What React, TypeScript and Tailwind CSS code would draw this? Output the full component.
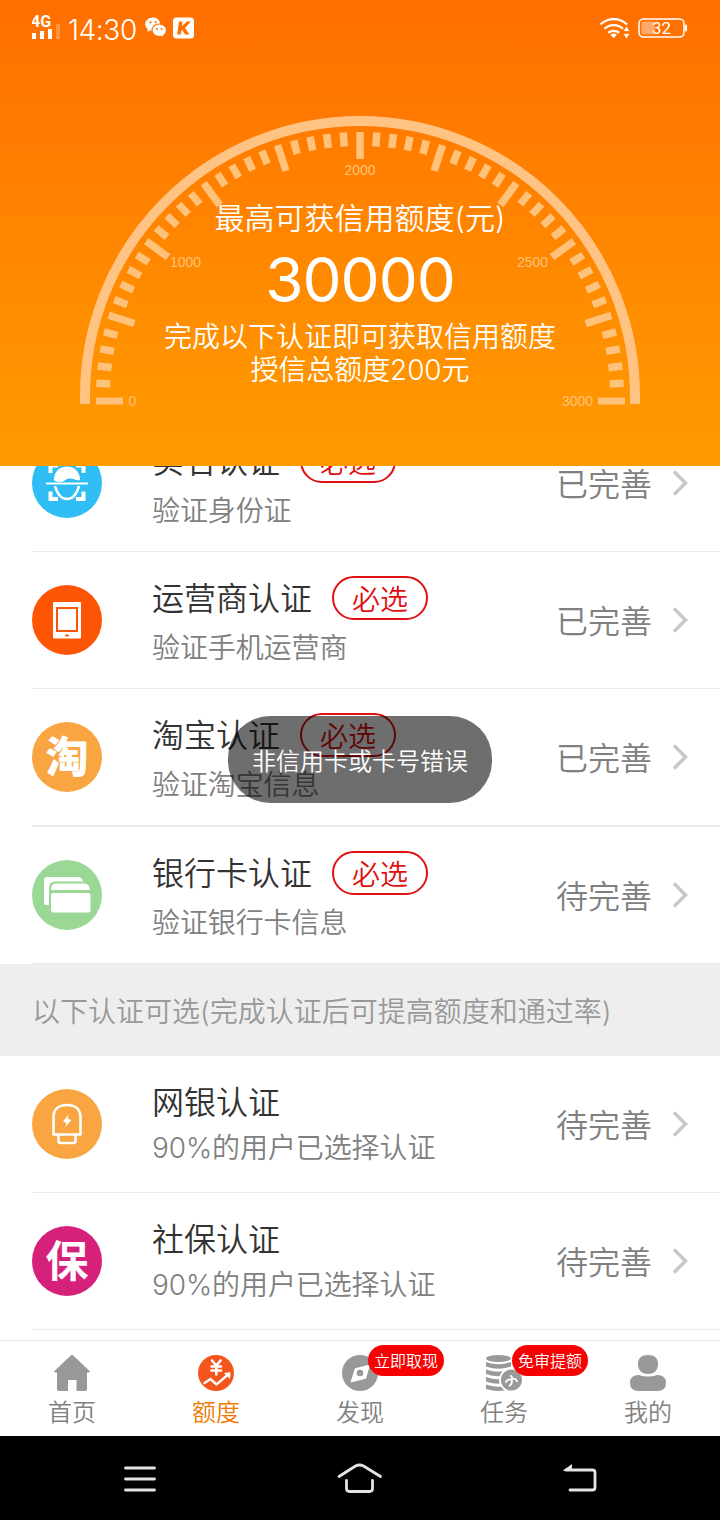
import React from 'react';

type RowProps = {
  icon: React.ReactNode;
  title: string;
  desc: string;
  status: string;
  required?: boolean;
  className?: string;
};

// angles of the long ticks, measured up from the left end of the arc
const majors = [-1, 17.8, 35.9, 53.7, 71.8, 90];

const Tick = ({ angle, long }: { angle: number; long: boolean }) => (
  <rect
    x={96}
    y={392.2}
    width={long ? 27 : 14}
    height={7.5}
    transform={`rotate(${angle} 360 396)`}
  />
);

const Gauge = () => {
  const ticks: { angle: number; long: boolean }[] = [];
  for (let i = 0; i < majors.length - 1; i++) {
    for (let j = 0; j < 5; j++) {
      const angle = majors[i] + ((majors[i + 1] - majors[i]) * j) / 5;
      ticks.push({ angle, long: j === 0 });
      ticks.push({ angle: 180 - angle, long: j === 0 });
    }
  }
  ticks.push({ angle: 90, long: true });
  return (
    <svg className="absolute inset-0" width="720" height="466" viewBox="0 0 720 466">
      <path d="M85 404V396A275 275 0 0 1 635 396V404" fill="none" stroke="#ffc384" strokeWidth="10" />
      <g fill="#ffc27a">
        {ticks
          .filter((t) => t.angle > 0 && t.angle < 180)
          .map((t) => (
            <Tick key={t.angle} angle={t.angle} long={t.long} />
          ))}
        <rect x="96" y="397.5" width="27" height="7" />
        <rect x="598" y="397.5" width="27" height="7" />
      </g>
      <g fill="#ffc27a" fontFamily="Liberation Sans, sans-serif" fontSize="14" textAnchor="middle">
        <text x="132.5" y="406">0</text>
        <text x="185.5" y="267">1000</text>
        <text x="360" y="175">2000</text>
        <text x="532.5" y="267">2500</text>
        <text x="577.5" y="406">3000</text>
      </g>
    </svg>
  );
};

const StatusBar = () => (
  <div className="relative flex h-[56px] items-center justify-between pl-8 pr-8 text-white">
    <div className="flex items-center">
      <svg width="30" height="28" viewBox="0 0 30 28" fill="#fff">
        <text x="-1" y="13" fontFamily="Roboto, sans-serif" fontSize="16" fontWeight="700">
          4G
        </text>
        <rect x="0" y="19" width="4" height="6" />
        <rect x="8" y="17" width="4" height="8" />
        <rect x="16" y="15" width="4" height="10" />
        <rect x="24" y="10" width="4" height="15" opacity=".25" />
      </svg>
      <span className="ml-[6px] mt-[3px] w-[68px] whitespace-nowrap text-[28px] leading-none tracking-[-0.4px]">14:30</span>
      <svg className="ml-[9px]" width="22" height="22" viewBox="0 0 22 22">
        <path d="M8 .5C3.600.5.200 3.500.200 7.200c0 2 1 3.700 2.600 4.900L2.200 15l3-1.500c.8.200 1.600.4 2.500.4 4.400 0 7.500-2.900 7.500-6.500S12.400.5 8 .5z" fill="#fff" />
        <circle cx="5.500" cy="5.300" r="1.100" fill="#ff7000" />
        <circle cx="10.500" cy="5.300" r="1.100" fill="#ff7000" />
        <path d="M14.300 7c-4.300 0-7.300 2.800-7.300 6.300s3 6.300 7.300 6.300c.8 0 1.500-.1 2.200-.3l2.700 1.600-.6-2.500c1.700-1.200 2.900-2.900 2.900-5.100 0-3.500-3.100-6.300-7.200-6.300z" fill="#fff" stroke="#ff7000" strokeWidth="1.200" />
        <circle cx="12" cy="12" r="1" fill="#ff7000" />
        <circle cx="16.500" cy="12" r="1" fill="#ff7000" />
      </svg>
      <svg className="ml-[6px]" width="22" height="22" viewBox="0 0 22 22">
        <rect x="0" y="0.500" width="21" height="21" rx="3.500" fill="#fff" />
        <path d="M6 4.500h3.600L9 9l5-4.500h4L12 11l4.500 6.500h-4.300L9.200 13l-.8 1-.5 3.500H4.200z" fill="#ff7000" />
      </svg>
    </div>
    <div className="flex items-center">
      <svg width="32" height="24" viewBox="0 0 32 24" fill="none" stroke="#fff" strokeWidth="2.200">
        <path d="M1.500 8.500a19 19 0 0 1 26.500 0" />
        <path d="M5.400 12.800a13.500 13.500 0 0 1 18.500 0" />
        <path d="M9.200 16.800a8.500 8.500 0 0 1 11 0" />
        <path d="M11.500 18.800q3.200-2.500 6.400 0L14.700 22z" fill="#fff" stroke="none" />
        <path d="M24 15.500h7L27.500 10zM24 17.500h7L27.500 23z" fill="#fff" stroke="#ff7000" strokeWidth=".8" />
      </svg>
      <svg className="ml-[7px]" width="50" height="22" viewBox="0 0 50 22">
        <rect x="1" y="2" width="45" height="18" rx="4.500" fill="none" stroke="#fff" strokeWidth="1.500" />
        <rect x="3.500" y="4.500" width="13" height="13" rx="2" fill="#ffa868" />
        <rect x="47" y="7.500" width="2" height="7" rx="1" fill="#fff" />
        <text x="23.500" y="17" textAnchor="middle" fontFamily="Roboto, sans-serif" fontSize="17" fontWeight="400" fill="#fff">
          32
        </text>
      </svg>
    </div>
  </div>
);

const FaceIcon = () => (
  <svg width="70" height="70" viewBox="0 0 70 70">
    <circle cx="35" cy="35" r="35" fill="#2fbdf3" />
    <g fill="none" stroke="#fff">
      <path d="M18.500 25v-7.500H26M44 17.500h7.500V25M51.500 43.500v7.500H44M26 51h-7.500v-7.500" strokeWidth="4" />
      <path d="M14 35.500h42" strokeWidth="2" />
      <path d="M23 38c2 7 6 13 12 13S45 45 47 38" strokeWidth="2.500" />
    </g>
    <path d="M22 32c0-8 5-13.500 13-13.500S48 24 48 32c-4 1-6-1.500-10-1.500-5 0-5 3.500-10 3.500-3 0-5-.5-6-2z" fill="#fff" />
  </svg>
);

const PhoneIcon = () => (
  <svg width="70" height="70" viewBox="0 0 70 70">
    <circle cx="35" cy="35" r="35" fill="#fd5503" />
    <rect x="21" y="17" width="28" height="36.500" rx="1" fill="#fff" />
    <rect x="25" y="23" width="20" height="23" fill="#fff" stroke="#fd5503" strokeWidth="2" />
    <rect x="33" y="49.500" width="4" height="2" rx="1" fill="#fd5503" />
  </svg>
);

const TaoIcon = () => (
  <div className="flex size-[70px] items-center justify-center rounded-full bg-[#f8a542] pt-[1px] text-[43px] font-black leading-none text-white">
    淘
  </div>
);

const CardIcon = () => (
  <svg width="70" height="70" viewBox="0 0 70 70">
    <circle cx="35" cy="35" r="35" fill="#9bd896" />
    <path d="M12 44V20q0-3 3-3h31q4 0 5 4.500H23q-6 0-6 7V45h-2q-3 0-3-1z" fill="#fff" />
    <path d="M19 30q0-6.500 5-6.500h29q4 0 5 6.500z" fill="#fff" />
    <rect x="19" y="33" width="39.500" height="19.500" rx="2.500" fill="#fff" />
  </svg>
);

const UsbIcon = () => (
  <svg width="70" height="70" viewBox="0 0 70 70">
    <circle cx="35" cy="35" r="35" fill="#f8a542" />
    <g fill="none" stroke="#fff" strokeWidth="2.600" strokeLinejoin="round">
      <path d="M21.500 45.500V28c0-7.500 5-12 13.500-12s13.500 4.500 13.500 12v17.500z" />
      <path d="M26.500 46v6q0 2 2 2h13q2 0 2-2v-6" />
    </g>
    <path d="M36.500 25.500L31 32.500l3.200 1.200-.8 4.300 6-7-3.600-1.200z" fill="#fff" />
  </svg>
);

const BaoIcon = () => (
  <div className="flex size-[70px] items-center justify-center rounded-full bg-[#d6217b] text-[43px] font-bold leading-none text-white">
    保
  </div>
);

const Row = ({ icon, title, desc, status, required, className = 'h-[137px] border-b' }: RowProps) => (
  <div className={`ml-8 flex items-center border-[#ececec] pr-8 ${className}`}>
    <div className="size-[70px] shrink-0">{icon}</div>
    <div className="ml-[50px] flex-1">
      <div className={`flex items-center ${required ? 'h-11' : 'h-9'}`}>
        <span className="pt-[2px] text-[32px] leading-none text-[#333]">{title}</span>
        {required && (
          <span className="ml-5 flex h-11 w-24 items-center justify-center rounded-full border-2 border-[#e01010] pt-1 text-[28px] leading-none text-[#e01010]">
            必选
          </span>
        )}
      </div>
      <p className="mt-[12px] text-[28px] leading-[32px] tracking-[-0.1px] text-[#808080]">{desc}</p>
    </div>
    <span className="pt-1 text-[32px] leading-none text-[#808080]">{status}</span>
    <svg className="ml-5" width="16" height="28" viewBox="0 0 16 28" fill="none" stroke="#c8c8c8" strokeWidth="3.500">
      <path d="M2 2.500L13.500 14 2 25.500" />
    </svg>
  </div>
);

const HomeTab = () => (
  <svg width="36" height="36" viewBox="0 0 36 36" fill="#999">
    <path d="M16.700.6q1.300-1.200 2.600 0L35.500 16q.6 1.500-1 1.500H33V34q0 2-2 2h-8.500V25H14v11H5q-2 0-2-2V17.500H1.500q-1.600 0-1-1.500z" />
  </svg>
);

const QuotaTab = () => (
  <svg width="36" height="36" viewBox="0 0 36 36">
    <circle cx="18" cy="18" r="18" fill="#f4551c" />
    <g fill="none" stroke="#fff" strokeWidth="2.600" strokeLinecap="round">
      <path d="M14 5.500l4.300 5 4.300-5M18.300 10.500v9M13.500 11.500h9.500M13.500 15.500h9.500" />
      <path d="M6.500 28l6-4 6 5.500L29.500 20" strokeWidth="2.400" />
    </g>
    <path d="M26 18l6.500-.8L32 24z" fill="#fff" />
  </svg>
);

const DiscoverTab = () => (
  <svg width="36" height="36" viewBox="0 0 36 36">
    <circle cx="18" cy="18" r="18" fill="#999" />
    <path d="M27 10.500L23.500 23 9.500 26.500l4-12.500z" fill="#fff" stroke="#fff" strokeWidth="1.500" strokeLinejoin="round" />
    <circle cx="18" cy="18" r="3.300" fill="#999" />
  </svg>
);

const TaskTab = () => (
  <svg width="37" height="36" viewBox="0 0 37 36">
    <ellipse cx="12.500" cy="3.500" rx="12.500" ry="3.500" fill="#999" />
    <g fill="#999">
      <path d="M0 7q12.500 4.500 25 0v4.500q-12.500 4.500-25 0z" />
      <path d="M0 14.500q12.500 4.500 25 0V19q-12.500 4.500-25 0z" />
      <path d="M0 22q12.500 4.500 25 0v4.500q-12.500 4.500-25 0z" />
      <path d="M0 29.500q12.500 4.500 25 0V34q-12.500 4-25 0z" />
    </g>
    <circle cx="25.500" cy="25" r="11.500" fill="#999" stroke="#fff" strokeWidth="1.800" />
    <path d="M19.500 27.500q2-3.500 6-3M23 31q4-2 2.500-6.500M24 20.500q2.500 1 2.500 3.500 4-1 4.500 3" fill="none" stroke="#fff" strokeWidth="1.800" />
  </svg>
);

const MineTab = () => (
  <svg width="36" height="36" viewBox="0 0 36 36" fill="#999">
    <path d="M18 0c6.500 0 10 3 10 9s-3.500 10-10 10S8 15 8 9s3.500-9 10-9z" />
    <path d="M9 20q9 3 18 0 9 0 9 8t-9 8H9q-9 0-9-8t9-8z" />
  </svg>
);

const tabs = [
  { label: '首页', icon: <HomeTab /> },
  { label: '额度', icon: <QuotaTab />, active: true },
  { label: '发现', icon: <DiscoverTab />, badge: '立即取现' },
  { label: '任务', icon: <TaskTab />, badge: '免审提额' },
  { label: '我的', icon: <MineTab /> },
];

const TabBar = () => (
  <div className="flex h-24 border-t border-[#ececec] bg-white">
    {tabs.map((tab) => (
      <div key={tab.label} className="relative flex flex-1 flex-col items-center pt-[14px]">
        {tab.icon}
        <span className={`mt-[10px] text-[24px] leading-[24px] ${tab.active ? 'text-[#f07800]' : 'text-[#808080]'}`}>
          {tab.label}
        </span>
        {tab.badge && (
          <span className="absolute left-20 top-1 flex h-[31px] w-[76px] items-center justify-center whitespace-nowrap rounded-full bg-[#f60202] text-[16px] leading-none text-white">
            {tab.badge}
          </span>
        )}
      </div>
    ))}
  </div>
);

const NavBar = () => (
  <div className="flex h-[84px] items-center justify-between bg-black pl-[123px] pr-[123px]">
    <svg className="mt-[1px]" width="34" height="28" viewBox="0 0 34 28" stroke="#e4e4e4" strokeWidth="2.800" strokeLinecap="round">
      <path d="M2.500 3h29M2.500 14h29M2.500 25h29" />
    </svg>
    <svg width="46" height="32" viewBox="0 0 46 32" fill="none" stroke="#e4e4e4" strokeWidth="2.800" strokeLinecap="round">
      <path d="M2 14.500L18.500 4q4-2 8 0L43.500 14.500" />
      <path d="M9.500 18.500v8q0 3 3 3h20q3 0 3-3v-8" />
    </svg>
    <svg width="34" height="32" viewBox="0 0 34 32" fill="none" stroke="#e4e4e4" strokeWidth="2.800" strokeLinecap="round">
      <path d="M3 8h26.500q2.500 0 2.500 2.500v15q0 2.500-2.500 2.500H7" />
      <path d="M0 8.500L9 2v7H1z" fill="#e4e4e4" stroke="none" />
    </svg>
  </div>
);

const App = () => {
  return (
    <div className="relative flex h-[1520px] w-[720px] flex-col overflow-hidden bg-white font-['Inter','Noto_Sans_CJK_SC',sans-serif] font-[350]">
      {/* Header with gauge */}
      <header className="relative h-[466px] shrink-0 bg-linear-to-b from-[#ff6e00] to-[#ff9b00] text-white">
        <Gauge />
        <StatusBar />
        <div className="relative flex flex-col items-center pt-[144px]">
          <p className="text-[30px] leading-[36px]">最高可获信用额度(元)</p>
          <p className="mt-[12px] text-[62px] font-normal leading-[64px] tracking-[-1px]">30000</p>
          <p className="mt-[9px] text-[28px] leading-[33px]">完成以下认证即可获取信用额度</p>
          <p className="text-[28px] leading-[33px] tracking-[-0.1px]">授信总额度200元</p>
        </div>
      </header>

      {/* Scrolled list */}
      <main className="h-[874px] shrink-0 overflow-hidden">
        <div className="-mt-[51px]">
          <Row icon={<FaceIcon />} title="实名认证" desc="验证身份证" status="已完善" required />
          <Row icon={<PhoneIcon />} title="运营商认证" desc="验证手机运营商" status="已完善" required />
          <Row
            icon={<TaoIcon />}
            title="淘宝认证"
            desc="验证淘宝信息"
            status="已完善"
            required
            className="h-[138px] border-b-2"
          />
          <Row icon={<CardIcon />} title="银行卡认证" desc="验证银行卡信息" status="待完善" required />
          <div className="flex h-[92px] items-center bg-[#eee] pl-8 pt-1 text-[28px] text-[#999]">
            以下认证可选(完成认证后可提高额度和通过率)
          </div>
          <Row icon={<UsbIcon />} title="网银认证" desc="90%的用户已选择认证" status="待完善" />
          <Row icon={<BaoIcon />} title="社保认证" desc="90%的用户已选择认证" status="待完善" />
        </div>
      </main>

      <TabBar />
      <NavBar />

      {/* Toast */}
      <div className="absolute left-[228px] top-[716px] flex h-[87px] w-[264px] items-center justify-center rounded-[42px] bg-black/57 pt-1 text-[24px] leading-none text-white">
        非信用卡或卡号错误
      </div>
    </div>
  );
};

export default App;
